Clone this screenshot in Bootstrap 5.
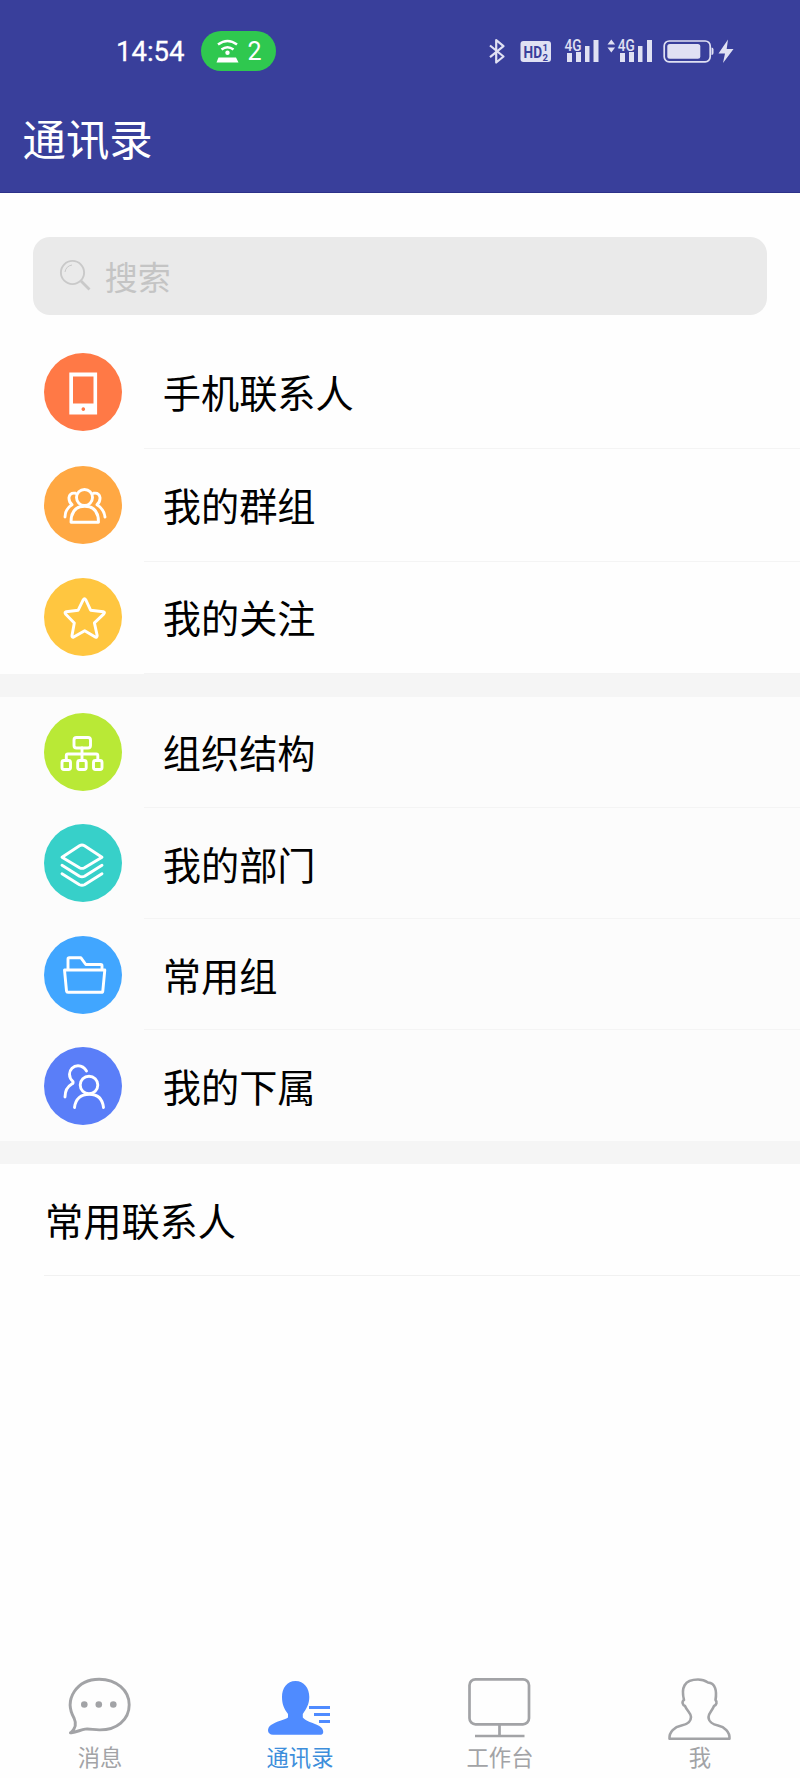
<!DOCTYPE html>
<html lang="zh-CN">
<head>
<meta charset="utf-8">
<meta name="viewport" content="width=device-width, initial-scale=1">
<title>通讯录</title>
<link rel="stylesheet" href="https://cdn.jsdelivr.net/npm/bootstrap@5.3.0/dist/css/bootstrap.min.css">
<style>
body{font-family:"Noto Sans CJK SC",sans-serif;background:#fefefe;color:#000;width:800px;height:1778px;overflow:hidden}
svg{display:block;flex:none;overflow:visible}
.app-header{background:#393f9b;height:192.5px;border-bottom:1px solid #2d3189}
.status-bar{height:102px;padding-left:116px;padding-right:66px}
.clock{font:400 27.5px/40px Roboto,sans-serif;width:85px;padding-top:2px;-webkit-text-stroke:.3px #fff}
.hotspot{background:#2fc84f;width:75px;height:40px;padding:0 14.5px 0 15px}
.hotspot span{font:400 25px/40px Roboto,sans-serif;padding-top:2px}
.page-title{font-size:43.4px;line-height:60px;padding-left:22.5px;margin-top:5px}
.search-box{margin:44.5px 33.3px 21.8px;height:77.7px;border-radius:17px;background:#eaeaea;color:#c4c4c4;font-size:33px;padding-left:26.5px;line-height:50px}
.search-box span{padding-left:14px}
.entry{font-size:38.2px;line-height:56px;padding-left:44.3px}
.entry .disc{width:78px;height:78px;flex:none;margin-right:22px}
.entry .lbl{padding:0 0 0 18.5px;border-bottom:1.5px solid #f4f4f4}
.group-a .entry{height:112.6px}
.group-a .disc{margin-top:-1px}
.group-b{background:#fcfcfc}
.group-b .entry{height:111.15px}
.group-b .entry .lbl{padding-top:1.5px}
.group-b .entry:last-child .lbl{border-color:transparent}
.band{height:22.4px;background:#f5f5f5}
.frequent{margin-left:44px;height:112px;border-bottom:1.5px solid #f1f1f1;font-size:38.2px;line-height:56px;padding:1px 0 0 1px}
.tabs{height:103px;color:#a2a3a6;font-size:22.3px;line-height:26px}
.tabs .on{color:#3d8edb}
.ln{fill:none;stroke:#fff;stroke-width:2.9;stroke-linecap:round;stroke-linejoin:round}
</style>
</head>
<body class="d-flex flex-column">
<header class="app-header text-white flex-shrink-0">
  <div class="status-bar d-flex align-items-center">
    <span class="clock">14:54</span>
    <div class="hotspot rounded-pill d-flex align-items-center justify-content-between">
      <svg width="23" height="24" viewBox="216 38 23 24"><g fill="none" stroke="#fff" stroke-width="2.6"><path d="M218 43.500q9.500-7 19 0M221.500 48.500q6-4.500 12 0"/></g><circle cx="227.500" cy="51.800" r="2.200" fill="#fff"/><path d="M218.500 56.500h17.500l2.500 5h-22z" fill="#fff"/></svg>
      <span>2</span>
    </div>
    <div class="d-flex align-items-center ms-auto">
      <svg width="246" height="26" viewBox="488 38 246 26" fill="#e0e1f3">
        <path d="M490 45.500l13.500 11-7.300 6V40.200l7.300 6L490 57.200" fill="none" stroke="#e0e1f3" stroke-width="2.200" stroke-linejoin="round"/>
        <rect x="520.500" y="41" width="30.500" height="21" rx="3"/>
        <g fill="#393f9b" font-family="Roboto" font-weight="700"><text x="523.500" y="58" font-size="17" textLength="18.500" lengthAdjust="spacingAndGlyphs">HD</text><text x="542.500" y="50.700" font-size="9.500">1</text><text x="542.500" y="60.700" font-size="9.500">2</text></g>
        <g font-family="Roboto" font-weight="500" font-size="16"><text x="564.500" y="50.500" textLength="17" lengthAdjust="spacingAndGlyphs">4G</text><text x="617.700" y="50.500" textLength="17" lengthAdjust="spacingAndGlyphs">4G</text></g>
        <path d="M567 53h5v9h-5zM576 52h5v10h-5zM585 46h4.500v16H585zM593.500 40h5v22h-5zM620 53h5v9h-5zM629 52h5v10h-5zM638 46h4.500v16H638zM647 40h5v22h-5zM607.500 44.500l3.800-5 3.800 5zM607.500 47.500l3.800 5 3.800-5z"/>
        <rect x="664.200" y="41" width="46" height="20.800" rx="5" fill="none" stroke="#e0e1f3" stroke-width="1.700"/><rect x="667.300" y="44" width="33" height="14.800" rx="2.500"/><path d="M711.500 47.500q2 0 2 2v3.500q0 2-2 2z"/>
        <path d="M728 39.500l-9.500 14h6.500l-2 9.500 10.500-14h-6.800z"/>
      </svg>
    </div>
  </div>
  <div class="page-title">通讯录</div>
</header>

<main class="flex-grow-1">
  <div class="search-box d-flex align-items-center">
    <svg width="31" height="31" viewBox="0 0 31 31" fill="none" stroke="#c9c9c9" stroke-width="1.900"><circle cx="12.500" cy="12.500" r="11.600"/><path d="M5 12q1-6 7-7" stroke-width="1"/><path d="M21 21l8.500 8.500" stroke-width="2.800"/></svg>
    <span>搜索</span>
  </div>
  <section class="group-a">
    <div class="entry d-flex align-items-center">
      <svg class="disc" viewBox="0 0 78 78"><circle cx="39" cy="39" r="39" fill="#ff7946"/><path fill="#fff" fill-rule="evenodd" d="M25.300 19.500h27.800V61.500H25.300zM29 23.500v27h20.500v-27zM39.300 54.300a1.800 1.800 0 1 0 .01 0z"/></svg>
      <div class="lbl flex-grow-1 h-100 d-flex align-items-center">手机联系人</div>
    </div>
    <div class="entry d-flex align-items-center">
      <svg class="disc" viewBox="0 0 78 78"><circle cx="39" cy="39" r="39" fill="#ffa843"/><g class="ln"><circle cx="40.500" cy="31.500" r="8"/><path d="M27 56.300h27.500C54.500 45 49 40.300 40.700 40.300S27 45 27 56.300zM31.500 27.300q-5.500-1-6.500 4.200-.3 4.300 3 7.200Q21 43 21 51M49.500 27.300q5.500-1 6.500 4.200.3 4.300-3 7.200 7 4.300 8 12.300"/></g></svg>
      <div class="lbl flex-grow-1 h-100 d-flex align-items-center">我的群组</div>
    </div>
    <div class="entry d-flex align-items-center">
      <svg class="disc" viewBox="0 0 78 78"><circle cx="39" cy="39" r="39" fill="#ffc640"/><path class="ln" d="M39.300 21.700q1.200-2 2.400 0l4.900 10.500 12.700 1.500q2 .5.600 2.200l-9.500 9 2.800 12.700q0 2-2 1.500L40.700 52.800l-11 6.300q-2 .6-1.700-1.500l2.300-12.700-8.800-9q-1.200-1.700.7-2.200l12-1.500z"/></svg>
      <div class="lbl flex-grow-1 h-100 d-flex align-items-center">我的关注</div>
    </div>
  </section>
  <div class="band"></div>
  <section class="group-b">
    <div class="entry d-flex align-items-center">
      <svg class="disc" viewBox="0 0 78 78"><circle cx="39" cy="39" r="39" fill="#b9e936"/><g class="ln"><rect x="30" y="24.500" width="16.500" height="10.500" rx="2.500"/><rect x="18" y="47.500" width="8.500" height="9" rx="2"/><rect x="33.700" y="47.500" width="8.500" height="9" rx="2"/><rect x="49.500" y="47.500" width="8.500" height="9" rx="2"/><path d="M38 35v12.500M22.300 47v-4.500q0-1.500 1.500-1.500h28.500q1.500 0 1.500 1.500V47"/></g></svg>
      <div class="lbl flex-grow-1 h-100 d-flex align-items-center">组织结构</div>
    </div>
    <div class="entry d-flex align-items-center">
      <svg class="disc" viewBox="0 0 78 78"><circle cx="39" cy="39" r="39" fill="#37d0c9"/><path class="ln" d="M18 33.200L35.500 21.700q2.500-1.400 5 0L58 33.200 40.500 43.700q-2.500 1.400-5 0zM18 41.300l17.500 11q2.500 1.200 5 0l17.500-11M18 49.700l17.500 11q2.500 1.200 5 0l17.500-11"/></svg>
      <div class="lbl flex-grow-1 h-100 d-flex align-items-center">我的部门</div>
    </div>
    <div class="entry d-flex align-items-center">
      <svg class="disc" viewBox="0 0 78 78"><circle cx="39" cy="39" r="39" fill="#41a6ff"/><path class="ln" d="M24 34V23q0-1.300 1.300-1.300h11.500l5 6.800h15q1.200 0 1.200 1.200V34M20.500 34h40.300l-2 21q-.1 1.300-1.400 1.300H24q-1.300 0-1.500-1.300z"/></svg>
      <div class="lbl flex-grow-1 h-100 d-flex align-items-center">常用组</div>
    </div>
    <div class="entry d-flex align-items-center">
      <svg class="disc" viewBox="0 0 78 78"><circle cx="39" cy="39" r="39" fill="#5a7ef8"/><g class="ln" stroke-width="3.600"><circle cx="45" cy="38" r="8.800"/><path d="M30.500 60.500C31.500 52 37 47.300 45.300 47.300S58.500 52 59.500 60.500M42.500 24Q39.500 18.700 34 18.700a8.600 8.600 0 0 0-8.500 8.600q0 4.200 3.500 7.200.5 2-1.500 2.700Q21 41 21 50"/></g></svg>
      <div class="lbl flex-grow-1 h-100 d-flex align-items-center">我的下属</div>
    </div>
  </section>
  <div class="band"></div>
  <div class="frequent d-flex align-items-center">常用联系人</div>
</main>

<nav class="tabs d-flex flex-shrink-0 text-center">
  <div class="col-3 d-flex flex-column align-items-center">
    <svg width="64" height="68" viewBox="68 1675 64 68" fill="none" stroke="#a2a3a6" stroke-width="2.900"><path d="M71 1732.500c4.500-4 5.500-9 3.200-14-11-19.500 3-39.300 25-39.300 17.500 0 30 11.500 30 25.500 0 15-12.500 25.500-30 25.200-6-.2-10-1.300-14-.8-4 .7-8 2.600-13.800 3.800-1.200.1-1.300-.1-.4-.4z" stroke-linejoin="round"/><g fill="#a2a3a6" stroke="none"><circle cx="84.300" cy="1704.500" r="3.300"/><circle cx="98.800" cy="1704.500" r="3.300"/><circle cx="113.300" cy="1704.500" r="3.300"/></g></svg>
    <span>消息</span>
  </div>
  <div class="col-3 d-flex flex-column align-items-center on">
    <svg width="64" height="68" viewBox="268 1675 64 68"><path fill="#4f8bff" d="M295.500 1681c8.500 0 13.800 7 13.800 16 0 7-3 12-6.500 17v3.500c3 4 10 5 16.500 8.500 5 3 5 8.700 1.500 8.700H273c-6 0-6.500-6.700-2-9.700 6-4 13-5 17-7.500v-3.500c-4-5-6-10-6-17 0-9 5-16 13.500-16z"/><path d="M309 1707.500h21M314 1714.500h16M319 1721.500h11" stroke="#4f8bff" stroke-width="2.800"/></svg>
    <span>通讯录</span>
  </div>
  <div class="col-3 d-flex flex-column align-items-center">
    <svg width="64" height="68" viewBox="468 1675 64 68" fill="none" stroke="#a2a3a6" stroke-width="2.700"><rect x="469.500" y="1679.300" width="59.500" height="45" rx="6"/><path d="M499.500 1724v12M475 1736h49.500"/></svg>
    <span>工作台</span>
  </div>
  <div class="col-3 d-flex flex-column align-items-center">
    <svg width="64" height="68" viewBox="668 1675 64 68" fill="none" stroke="#a2a3a6" stroke-width="2.600" stroke-linejoin="round"><path d="M669.500 1738.700c-.5-7 5-11.700 12-13.200 5-1 9.500-3 9.500-8.500 0-4-4-6-6-11-2.500-1-3.500-4.500-1-6-3-12 0-20.500 14-20.500 4 0 7.500 1.300 10 3 7.500.5 9 8.500 7.500 17.500 2 2 1 5-1.500 6-2 5-5.500 7-5.500 11 0 4.500 4.500 7.500 9.500 8.500 6.500 1.500 12 6.200 11.500 13.200z"/></svg>
    <span>我</span>
  </div>
</nav>
<script src="https://cdn.jsdelivr.net/npm/bootstrap@5.3.0/dist/js/bootstrap.bundle.min.js"></script>
</body>
</html>
